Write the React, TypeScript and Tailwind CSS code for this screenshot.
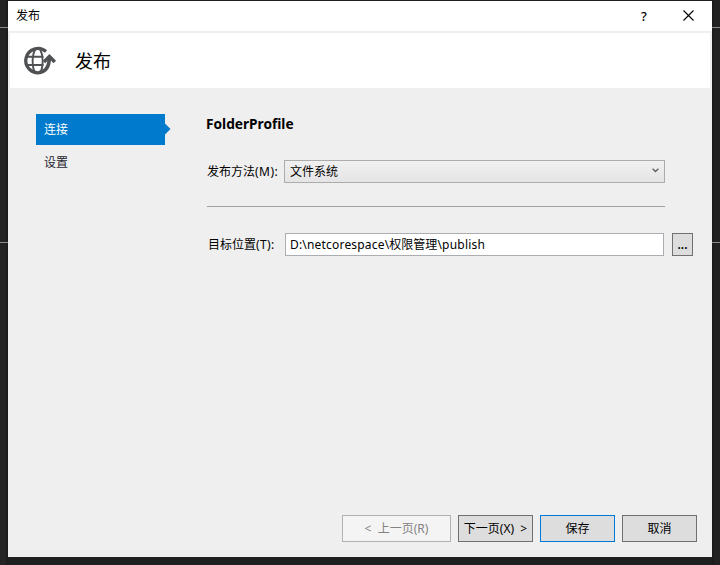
import type { ReactNode } from 'react';

const FONT = "font-['Noto_Sans','Noto_Sans_CJK_SC',sans-serif]";

function Gutter({ side }: { side: 'left' | 'right' }) {
  const shade =
    side === 'left'
      ? 'bg-linear-to-r from-[#242424] from-60% to-[#1a1a1a]'
      : 'bg-linear-to-l from-[#212121] from-60% to-[#1a1a1a]';
  return (
    <div className={`flex w-2 shrink-0 flex-col ${shade}`}>
      <div className="mt-[27px] h-px bg-[#8a8a8a]" />
      <div className="mt-[214px] h-px bg-[#8a8a8a]" />
    </div>
  );
}

function PublishIcon() {
  return (
    <svg width="34" height="30" viewBox="0 0 34 30" fill="none" stroke="#505153">
      <path d="M23 5.6A12.1 12.1 0 1 0 18.4 26.2" strokeWidth="3.3" />
      <path d="M12.2 3.5C8.8 9.5 8.8 21 12.2 27M17.2 3.5C19 7 19.7 10 19.7 14.5C19.7 19.5 19 23.5 17.2 27" strokeWidth="1.9" />
      <path d="M3.5 10.8H20.5M3.5 19H20.5" strokeWidth="1.9" />
      <path d="M16.5 26.4C23 25.6 26.4 21 26.4 10.5" strokeWidth="3.6" />
      <path d="M21 16L26.4 10.4L31.8 16" strokeWidth="3.4" />
    </svg>
  );
}

function DialogButton({ className, children }: { className: string; children: ReactNode }) {
  return (
    <button className={`flex h-[27px] shrink-0 items-center justify-center whitespace-pre border text-xs ${className}`}>
      {children}
    </button>
  );
}

export default function App() {
  return (
    <div className={`flex h-[565px] w-[720px] overflow-hidden bg-[#1f2020] text-xs leading-4 text-black ${FONT}`}>
      <Gutter side="left" />
      <main className="mt-px flex h-[556px] w-[704px] shrink-0 flex-col bg-[#efefef]">
        <div className="flex h-[30px] items-center bg-white pl-2">
          <span>发布</span>
          <span className="ml-auto mr-[35px] w-2 text-center text-[13px] font-medium">?</span>
          <svg className="-mt-px mr-[18px]" width="11" height="11" viewBox="0 0 11 11" stroke="#000" strokeWidth="1.1">
            <path d="M0.5 0.5L10.5 10.5M10.5 0.5L0.5 10.5" />
          </svg>
        </div>
        <header className="mx-0.5 mt-0.5 flex h-[55px] items-center bg-white pl-[13px]">
          <PublishIcon />
          <h1 className="ml-[18px] text-lg">发布</h1>
        </header>
        <div className="flex flex-1">
          <nav className="ml-7 mt-[26px] w-[135px] shrink-0">
            <div className="flex h-[31px] items-center">
              <div className="flex h-full w-[129px] items-center bg-[#007acc] pl-2 text-white">连接</div>
              <svg className="-mt-px" width="6" height="12" viewBox="0 0 6 12" fill="#007acc">
                <path d="M0 0.5L5.5 6L0 11.5Z" />
              </svg>
            </div>
            <div className="flex h-9 items-center pl-2 text-[#1e1e2e]">设置</div>
          </nav>
          <section className="ml-[35px] mt-[27px] flex w-[488px] flex-col">
            <h2 className="h-[18px] text-[13.7px] font-bold leading-[18px]">FolderProfile</h2>
            <div className="mt-[27px] flex h-[23px] items-center">
              <label className="w-[78px] whitespace-nowrap pl-px">
                发布方法<span className="tracking-[0.5px]">(M):</span>
              </label>
              <div className="flex h-[23px] w-[381px] items-center justify-between border border-[#acacac] bg-linear-to-b from-[#f0f0f0] to-[#e5e5e5] pl-[5px] pr-[5px]">
                <span>文件系统</span>
                <svg className="-mt-0.5" width="7" height="5" viewBox="0 0 7 5" fill="none" stroke="#606060" strokeWidth="1.4">
                  <path d="M0.6 0.7L3.5 3.6L6.4 0.7" />
                </svg>
              </div>
            </div>
            <hr className="ml-px mt-[23px] w-[458px] border-[#a0a0a0]" />
            <div className="mt-[26px] flex h-[23px] items-center">
              <label className="w-[79px] whitespace-nowrap pl-0.5">
                目标位置<span className="tracking-[0.4px]">(T):</span>
              </label>
              <div className="flex h-[23px] w-[379px] items-center whitespace-pre border border-[#abadb3] bg-white pl-1">
                <span className="tracking-[0.19px]">D:\netcorespace\</span>权限管理<span className="tracking-[0.22px]">\publish</span>
              </div>
              <button className="ml-2 flex h-[23px] w-[21px] items-center justify-center border border-[#707070] bg-[#dddddd] font-semibold">...</button>
            </div>
          </section>
        </div>
        <footer className="mb-[15px] mr-[15px] flex justify-end gap-[7px]">
          <DialogButton className="w-[109px] border-[#adb2b5] bg-[#f4f4f4] text-[#838383]">{'<  上一页(R)'}</DialogButton>
          <DialogButton className="w-[75px] border-[#707070] bg-[#dddddd]">{'下一页(X)  >'}</DialogButton>
          <DialogButton className="w-[75px] border-[#0078d7] bg-[#dddddd]">保存</DialogButton>
          <DialogButton className="w-[75px] border-[#707070] bg-[#dddddd]">取消</DialogButton>
        </footer>
      </main>
      <Gutter side="right" />
    </div>
  );
}
